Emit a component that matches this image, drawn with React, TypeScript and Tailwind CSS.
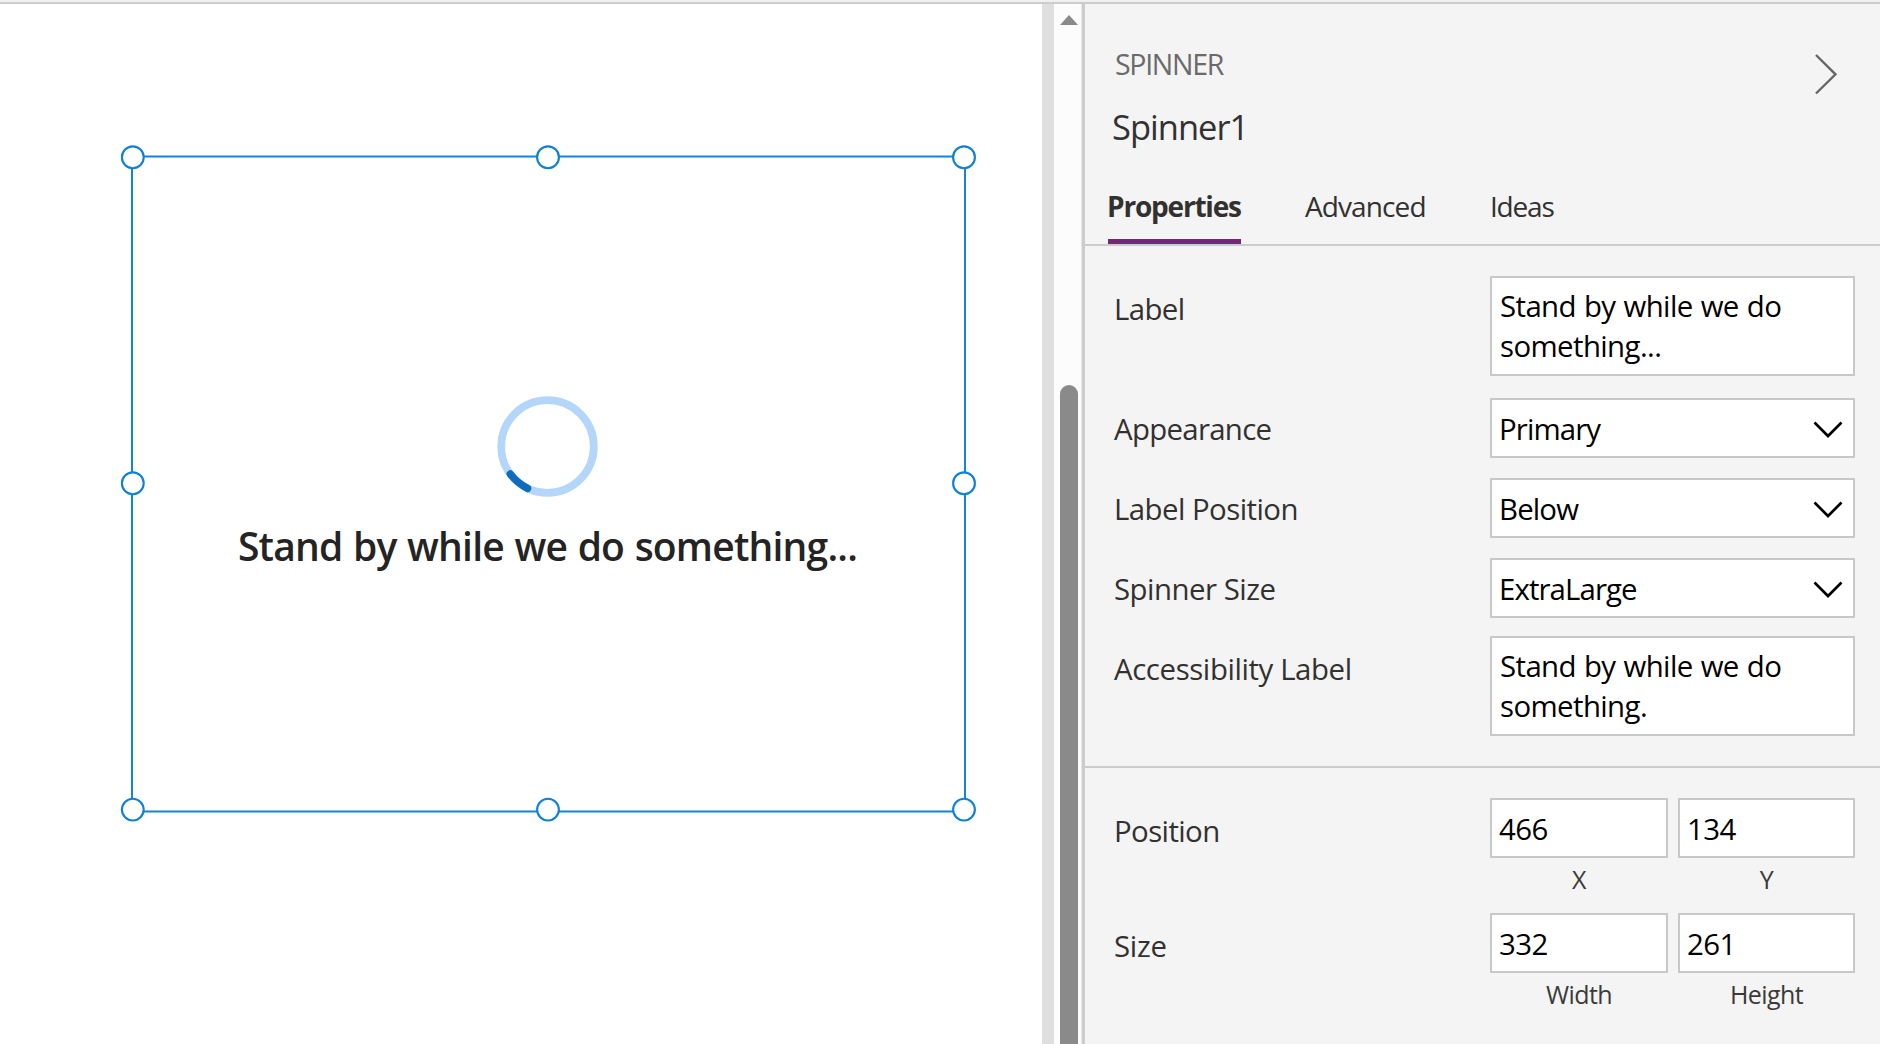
import { useState, type ReactNode } from "react";
import { clsx } from "clsx";

const tabs = [
  { id: "Properties", className: "w-[133px] tracking-[-1.2px]", indent: "-ml-px" },
  { id: "Advanced", className: "w-[121px] tracking-[-0.9px]", indent: "" },
  { id: "Ideas", className: "w-[70px] tracking-[-1.2px]", indent: "" },
];

// Selection handles around the control on the canvas
const handles = [
  [132.8, 157.3],
  [548, 157.3],
  [964, 157.3],
  [132.8, 483.3],
  [964, 483.3],
  [132.8, 809.6],
  [548, 809.6],
  [964, 809.6],
];

function Spinner() {
  return (
    <svg width="101" height="101" viewBox="0 0 101 101" fill="none">
      <circle cx="50.5" cy="50.5" r="46.3" stroke="#b4d6fa" strokeWidth="7.8" />
      <path d="M13.3 78A46.3 46.3 0 0 0 30.6 92.3" stroke="#0f6cbd" strokeWidth="7.4" strokeLinecap="round" />
    </svg>
  );
}

function Canvas() {
  return (
    <div className="relative w-[1042px] shrink-0 overflow-hidden bg-white">
      <div className="absolute top-[152px] left-[130px] flex h-[658px] w-[835px] flex-col items-center pt-[240px]">
        <Spinner />
        <div className="mt-6 text-[39px] leading-[50px] font-semibold tracking-[-0.8px] whitespace-nowrap text-[#242424] [word-spacing:1.2px]">
          Stand by while we do something...
        </div>
      </div>
      <svg className="absolute -top-1 left-0" width="1042" height="900" fill="none">
        <rect x="132" y="156.5" width="833" height="655" stroke="#1583d8" strokeWidth="2" />
        {handles.map(([x, y]) => (
          <circle key={`${x}-${y}`} cx={x} cy={y} r="10.9" fill="#fff" stroke="#0f80d7" strokeWidth="2.1" />
        ))}
      </svg>
    </div>
  );
}

function Scrollbar() {
  return (
    <div className="flex w-[27px] shrink-0 flex-col items-start bg-[#fcfcfc] pt-[11px] pl-1.5">
      <svg width="18" height="10" viewBox="0 0 18 10">
        <path d="M9 0L18 10H0z" fill="#8a8a8a" />
      </svg>
      <div className="mt-[360px] w-[18px] flex-1 rounded-t-full bg-[#8a8a8a]" />
    </div>
  );
}

function Row({ label, className, labelClass, children }: { label: string; className?: string; labelClass?: string; children: ReactNode }) {
  return (
    <div className={clsx("flex items-start pr-[25px] pl-[29px]", className)}>
      <div className={clsx("w-[376px] shrink-0 leading-10 text-[#323130]", labelClass)}>{label}</div>
      {children}
    </div>
  );
}

function TextArea({ lines }: { lines: string[] }) {
  return (
    <div className="h-[100px] flex-1 border-2 border-[#c8c8c8] bg-white px-2 pt-2 leading-10 text-black">
      {lines.map((line) => (
        <div key={line} className="tracking-[-0.6px] [word-spacing:1px]">
          {line}
        </div>
      ))}
    </div>
  );
}

function Select({ value, tracking }: { value: string; tracking: string }) {
  return (
    <div className="flex h-[60px] flex-1 items-center justify-between border-2 border-[#c8c8c8] bg-white pr-[10px] pl-[7px] text-black">
      <span className={clsx("pt-px leading-10", tracking)}>{value}</span>
      <svg className="mt-px" width="30" height="18" viewBox="0 0 30 18" fill="none">
        <path d="M1.5 2.5L15 16L28.5 2.5" stroke="#000" strokeWidth="2.7" />
      </svg>
    </div>
  );
}

function NumberInput({ value, caption, className }: { value: string; caption: string; className: string }) {
  return (
    <div className={className}>
      <div className="flex h-[60px] items-center border-2 border-[#c8c8c8] bg-white px-[7px] pt-0.5 tracking-[-0.6px] text-black">{value}</div>
      <div className="mt-[5px] text-center text-[25px] leading-8 tracking-[-0.6px] text-[#3b3a39]">{caption}</div>
    </div>
  );
}

export default function App() {
  const [active, setActive] = useState("Properties");

  return (
    <div className="flex h-[1044px] w-[1880px] flex-col overflow-hidden bg-[#f4f4f4] font-['Open_Sans','Noto_Sans',sans-serif]">
      <div className="h-1 shrink-0 border-b-2 border-[#cccccc] bg-[#f1f1f1]" />

      <div className="flex min-h-0 flex-1">
        <Canvas />
        <div className="w-3 shrink-0 bg-[#dfdfdf]" />
        <Scrollbar />
        <div className="w-px shrink-0 bg-[#e6e6e6]" />
        <div className="w-[3px] shrink-0 bg-[#cccccc]" />

        <div className="flex-1 text-[29.4px]">
          <div className="flex items-start justify-between pt-10 pr-[40px] pl-[27px]">
            <div>
              <div className="pl-[3px] text-[28.5px] leading-10 tracking-[-1.3px] text-[#6a6a6a]">SPINNER</div>
              <div className="mt-[21px] text-[34.5px] leading-[44px] tracking-[-1px] text-[#323130]">Spinner1</div>
            </div>
            <svg className="mt-2" width="26" height="44" viewBox="0 0 26 44" fill="none">
              <path d="M2 3L21.5 22.3L2 41.5" stroke="#666" strokeWidth="2.4" />
            </svg>
          </div>

          <div className="mt-[41px] flex gap-16 border-b-2 border-[#cccccc] pl-[23px] text-[28px] leading-8 text-[#323130]">
            {tabs.map((tab) => (
              <button
                key={tab.id}
                onClick={() => setActive(tab.id)}
                className={clsx(
                  "border-b-[5px] pb-[17px] text-left whitespace-nowrap",
                  tab.className,
                  active === tab.id ? "border-[#742774] font-bold" : "border-transparent"
                )}
              >
                <span className={tab.indent}>{tab.id}</span>
              </button>
            ))}
          </div>

          <div className="border-b-2 border-[#cccccc] py-[30px]">
            <Row label="Label" labelClass="pt-[13px] tracking-[-0.6px]">
              <TextArea lines={["Stand by while we do", "something..."]} />
            </Row>
            <Row label="Appearance" className="mt-[22px]" labelClass="pt-[11px] tracking-[-0.7px]">
              <Select value="Primary" tracking="tracking-[-0.9px]" />
            </Row>
            <Row label="Label Position" className="mt-5" labelClass="pt-[11px] tracking-[-0.55px]">
              <Select value="Below" tracking="tracking-[-0.85px]" />
            </Row>
            <Row label="Spinner Size" className="mt-5" labelClass="pt-[11px] tracking-[-0.5px]">
              <Select value="ExtraLarge" tracking="tracking-[-0.9px]" />
            </Row>
            <Row label="Accessibility Label" className="mt-[18px]" labelClass="pt-[13px] tracking-[-0.4px]">
              <TextArea lines={["Stand by while we do", "something."]} />
            </Row>
          </div>

          <div className="pt-[30px]">
            <Row label="Position" labelClass="pt-[13px] tracking-[-0.6px]">
              <NumberInput value="466" caption="X" className="w-[178px]" />
              <NumberInput value="134" caption="Y" className="ml-[10px] w-[177px]" />
            </Row>
            <Row label="Size" className="mt-[18px]" labelClass="pt-[13px] tracking-[-0.3px]">
              <NumberInput value="332" caption="Width" className="w-[178px]" />
              <NumberInput value="261" caption="Height" className="ml-[10px] w-[177px]" />
            </Row>
          </div>
        </div>
      </div>
    </div>
  );
}
